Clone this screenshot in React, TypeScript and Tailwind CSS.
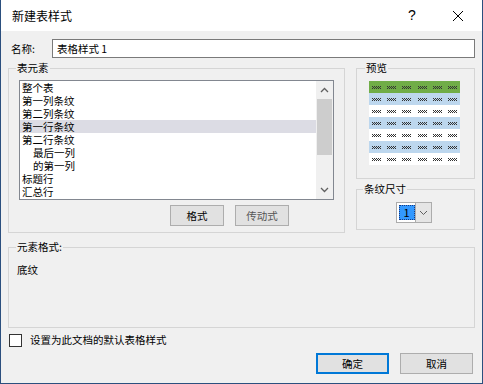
import React from "react";

const font = { fontFamily: '"Noto Sans CJK SC", "Noto Sans", sans-serif' };

function Dots() {
  return (
    <svg width="9" height="3" viewBox="0 0 9 3" className="block">
      {[0, 2, 4, 6, 8].map((x) => (
        <rect key={"a" + x} x={x} y={0} width={1} height={1} fill="#333" />
      ))}
      {[1, 3, 5, 7].map((x) => (
        <rect key={"b" + x} x={x} y={1} width={1} height={1} fill="#333" />
      ))}
      {[0, 2, 4, 6, 8].map((x) => (
        <rect key={"c" + x} x={x} y={2} width={1} height={1} fill="#333" />
      ))}
    </svg>
  );
}

const rows = ["header", "blue", "white", "blue", "white", "blue", "white"];

const items: { t: string; indent?: boolean; sel?: boolean }[] = [
  { t: "整个表" },
  { t: "第一列条纹" },
  { t: "第二列条纹" },
  { t: "第一行条纹", sel: true },
  { t: "第二行条纹" },
  { t: "最后一列", indent: true },
  { t: "的第一列", indent: true },
  { t: "标题行" },
  { t: "汇总行" },
];

export default function App() {
  return (
    <div
      className="w-[483px] h-[384px] flex flex-col bg-[#f0f0f0] border-x border-b border-[#2b4f7e] text-[10.5px] text-black overflow-hidden"
      style={font}
    >
      {/* Title bar */}
      <div className="h-[31px] shrink-0 bg-white flex items-center pl-[11px] pr-[18px]">
        <span className="text-[12px] flex-1 leading-none">新建表样式</span>
        <span className="text-[14px] w-[12px] text-center mr-[34px]" style={{ fontFamily: '"Liberation Sans", sans-serif' }}>?</span>
        <svg width="12" height="12" viewBox="0 0 12 12" className="block">
          <path d="M1 1 L11 11 M11 1 L1 11" stroke="#000" strokeWidth="1" />
        </svg>
      </div>

      <div className="flex flex-col px-[7px] pt-[8px]">
        {/* Name row */}
        <div className="flex items-center h-[19px]">
          <span className="w-[44px] pl-[3px]">名称:</span>
          <div className="flex-1 h-[19px] bg-white border border-[#7a7a7a] flex items-center pl-[4px]">
            表格样式 1
          </div>
        </div>

        {/* Groups row */}
        <div className="flex gap-[11px] mt-[3px]">
          <fieldset className="w-[337px] h-[172px] border border-[#d5d5d5]">
            <legend className="ml-[7px] px-[1px] leading-[14px]">表元素</legend>
            <div className="pl-[10px]">
              <div className="w-[315px] h-[120px] mt-[5px] bg-white border border-[#828790] flex">
                <div className="flex-1 flex flex-col">
                  {items.map((it) => (
                    <div
                      key={it.t}
                      className={
                        "h-[13px] leading-[13px] overflow-hidden " +
                        (it.indent ? "pl-[13px] " : "pl-[2px] ") +
                        (it.sel ? "bg-[#dcdce4] " : "")
                      }
                    >
                      {it.t}
                    </div>
                  ))}
                </div>
                <div className="w-[17px] bg-[#f0f0f0] flex flex-col items-center">
                  <div className="h-[18px] flex items-center justify-center">
                    <svg width="9" height="6" viewBox="0 0 9 6"><path d="M1 5 L4.5 1.5 L8 5" stroke="#606060" strokeWidth="1.3" fill="none" /></svg>
                  </div>
                  <div className="w-[15px] h-[56px] bg-[#cdcdcd]" />
                  <div className="flex-1" />
                  <div className="h-[18px] flex items-center justify-center">
                    <svg width="9" height="6" viewBox="0 0 9 6"><path d="M1 1 L4.5 4.5 L8 1" stroke="#606060" strokeWidth="1.3" fill="none" /></svg>
                  </div>
                </div>
              </div>
              <div className="flex gap-[11px] pl-[151px] mt-[5px]">
                <div className="w-[54px] h-[21px] bg-[#e1e1e1] border border-[#adadad] flex items-center justify-center">格式</div>
                <div className="w-[54px] h-[21px] bg-[#e1e1e1] border border-[#adadad] flex items-center justify-center text-[#555]">传动式</div>
              </div>
            </div>
          </fieldset>

          <div className="w-[119px] flex flex-col">
            <fieldset className="h-[118px] border border-[#d5d5d5]">
              <legend className="ml-[8px] px-[1px] leading-[14px]">预览</legend>
              <div className="w-[91px] ml-[12px] mt-[6px] flex flex-col">
                {rows.map((r, i) => (
                  <div
                    key={i}
                    className={
                      "h-[12px] flex items-center justify-around " +
                      (r === "header" ? "bg-[#70ad47]" : r === "blue" ? "bg-[#bdd7ee]" : "bg-white")
                    }
                  >
                    {[0, 1, 2, 3, 4, 5].map((c) => (
                      <Dots key={c} />
                    ))}
                  </div>
                ))}
              </div>
            </fieldset>
            <fieldset className="h-[48px] mt-[3px] border border-[#d5d5d5]">
              <legend className="ml-[6px] px-[1px] leading-[14px]">条纹尺寸</legend>
              <div className="flex justify-center mt-[6px] pr-[4px]">
                <div className="w-[36px] h-[21px] border border-[#acacac] bg-white flex">
                  <div className="w-[16px] m-[2px] mr-0 bg-[#3399ff] border border-dotted border-[#1a3a80] flex items-center justify-center text-[11px] leading-none">1</div>
                  <div className="flex-1 bg-[#e5e5e5] border-l border-[#acacac] flex items-center justify-center">
                    <svg width="9" height="6" viewBox="0 0 9 6"><path d="M1 1 L4.5 4.5 L8 1" stroke="#606060" strokeWidth="1" fill="none" /></svg>
                  </div>
                </div>
              </div>
            </fieldset>
          </div>
        </div>

        {/* Element format */}
        <fieldset className="h-[88px] mt-[7px] border border-[#d5d5d5]">
          <legend className="ml-[7px] px-[1px] leading-[14px]">元素格式:</legend>
          <div className="mt-[8px] pl-[8px]">底纹</div>
        </fieldset>

        {/* Checkbox */}
        <div className="flex items-center mt-[5px] h-[14px]">
          <div className="w-[13px] h-[13px] bg-white border border-[#333] ml-[1px]" />
          <span className="ml-[8px]">设置为此文档的默认表格样式</span>
        </div>

        {/* Buttons */}
        <div className="flex justify-end gap-[11px] mt-[6px] pr-[2px]">
          <div className="w-[73px] h-[21px] bg-[#e1e1e1] border-2 border-[#0078d7] flex items-center justify-center">确定</div>
          <div className="w-[73px] h-[21px] bg-[#e1e1e1] border border-[#adadad] flex items-center justify-center">取消</div>
        </div>
      </div>
    </div>
  );
}
